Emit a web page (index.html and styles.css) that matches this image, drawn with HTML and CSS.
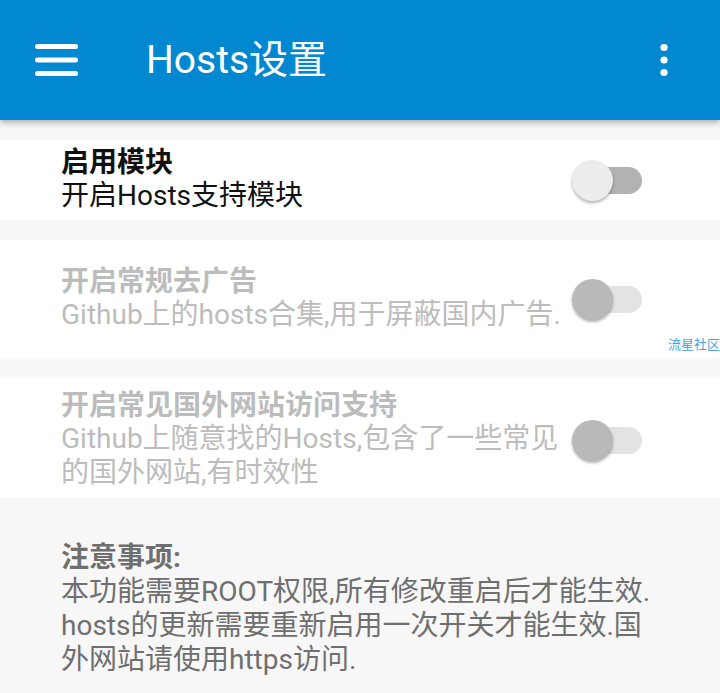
FILE: index.html
```html
<!DOCTYPE html>
<html lang="zh-CN">

<head>
    <meta charset="UTF-8">
    <meta name="viewport" content="width=device-width, initial-scale=1.0">
    <title>Hosts设置</title>
    <link rel="stylesheet" href="styles.css">
</head>

<body>
    <header class="appbar">
        <svg class="menu-icon" width="43" height="32" viewBox="0 0 43 32">
            <rect x="0" y="0" width="43" height="5" rx="2.5" fill="#fff" />
            <rect x="0" y="13.5" width="43" height="5" rx="2.5" fill="#fff" />
            <rect x="0" y="27" width="43" height="5" rx="2.5" fill="#fff" />
        </svg>
        <h1 class="appbar-title">Hosts设置</h1>
        <svg class="more-icon" width="8" height="32" viewBox="0 0 8 32">
            <circle cx="4" cy="3.5" r="3.6" fill="#fff" />
            <circle cx="4" cy="16" r="3.6" fill="#fff" />
            <circle cx="4" cy="28.5" r="3.6" fill="#fff" />
        </svg>
    </header>

    <main class="content">
        <!-- 启用模块 -->
        <div class="pref pref-small">
            <div class="pref-text">
                <div class="pref-title">启用模块</div>
                <div class="pref-summary">开启Hosts支持模块</div>
            </div>
            <div class="switch">
                <span class="switch-track"></span>
                <span class="switch-thumb"></span>
            </div>
        </div>

        <div class="pref pref-medium disabled">
            <div class="pref-text">
                <div class="pref-title">开启常规去广告</div>
                <div class="pref-summary">Github上的hosts合集,用于屏蔽国内广告.</div>
            </div>
            <div class="switch">
                <span class="switch-track"></span>
                <span class="switch-thumb"></span>
            </div>
            <span class="watermark">流星社区</span>
        </div>

        <div class="pref pref-large disabled">
            <div class="pref-text">
                <div class="pref-title">开启常见国外网站访问支持</div>
                <div class="pref-summary">Github上随意找的Hosts,包含了一些常见的国外网站,有时效性</div>
            </div>
            <div class="switch">
                <span class="switch-track"></span>
                <span class="switch-thumb"></span>
            </div>
        </div>

        <div class="notes">
            <div class="notes-title">注意事项:</div>
            <p class="notes-text">本功能需要ROOT权限,所有修改重启后才能生效.<wbr>hosts的更新需要重新启用一次开关才能生效.<wbr>国外网站请使用https访问.</p>
        </div>
    </main>
</body>

</html>
```

FILE: styles.css
```css
body {
    margin: 0;
    font-family: Roboto, "Noto Sans CJK SC", sans-serif;
    background-color: #f7f7f7;
    color: #111;
}

.appbar {
    position: relative;
    z-index: 1;
    display: flex;
    align-items: center;
    height: 120px;
    padding: 0 52px 0 35px;
    background-color: #0288d1;
    /* Light blue 700 */
    box-shadow: 0 3px 6px rgba(0, 0, 0, 0.28);
}

.menu-icon {
    flex-shrink: 0;
}

.appbar-title {
    flex: 1;
    margin: 0 0 0 68px;
    font-size: 39px;
    font-weight: normal;
    line-height: 46px;
    color: #fff;
}

.more-icon {
    flex-shrink: 0;
}

.content {
    padding-top: 20px;
}

.pref {
    position: relative;
    display: flex;
    align-items: center;
    box-sizing: border-box;
    padding: 0 78px 0 61px;
    margin-bottom: 20px;
    background-color: #fff;
}

.pref-small {
    min-height: 80px;
}

.pref-medium {
    min-height: 118px;
}

.pref-large {
    min-height: 120px;
    padding-top: 4px;
}

.pref-text {
    width: 511px;
    flex-shrink: 0;
}

.pref-title {
    font-size: 28px;
    font-weight: bold;
    line-height: 32px;
}

.pref-summary {
    font-size: 28px;
    line-height: 34px;
}

.disabled .pref-title,
.disabled .pref-summary {
    color: #bcbcbc;
}

/* switch */
.switch {
    position: relative;
    width: 70px;
    height: 41px;
}

.switch-track {
    position: absolute;
    right: 0;
    top: 7px;
    width: 66px;
    height: 27px;
    border-radius: 14px;
    background-color: #b2b2b2;
}

.switch-thumb {
    position: absolute;
    left: 0;
    top: 0;
    width: 41px;
    height: 41px;
    border-radius: 50%;
    background-color: #ececec;
    box-shadow: 0 2px 3px rgba(0, 0, 0, 0.3);
}

.disabled .switch-track {
    background-color: #e3e3e3;
}

.disabled .switch-thumb {
    background-color: #b9b9b9;
}

.watermark {
    position: absolute;
    right: 0;
    bottom: 6px;
    font-size: 13px;
    line-height: 14px;
    color: #4a9fe0;
}

.notes {
    padding: 22px 61px 0;
    color: #6f6f6f;
}

.notes-title {
    font-size: 28px;
    font-weight: bold;
    line-height: 35px;
}

.notes-text {
    margin: 0;
    font-size: 28px;
    line-height: 34px;
}
```
